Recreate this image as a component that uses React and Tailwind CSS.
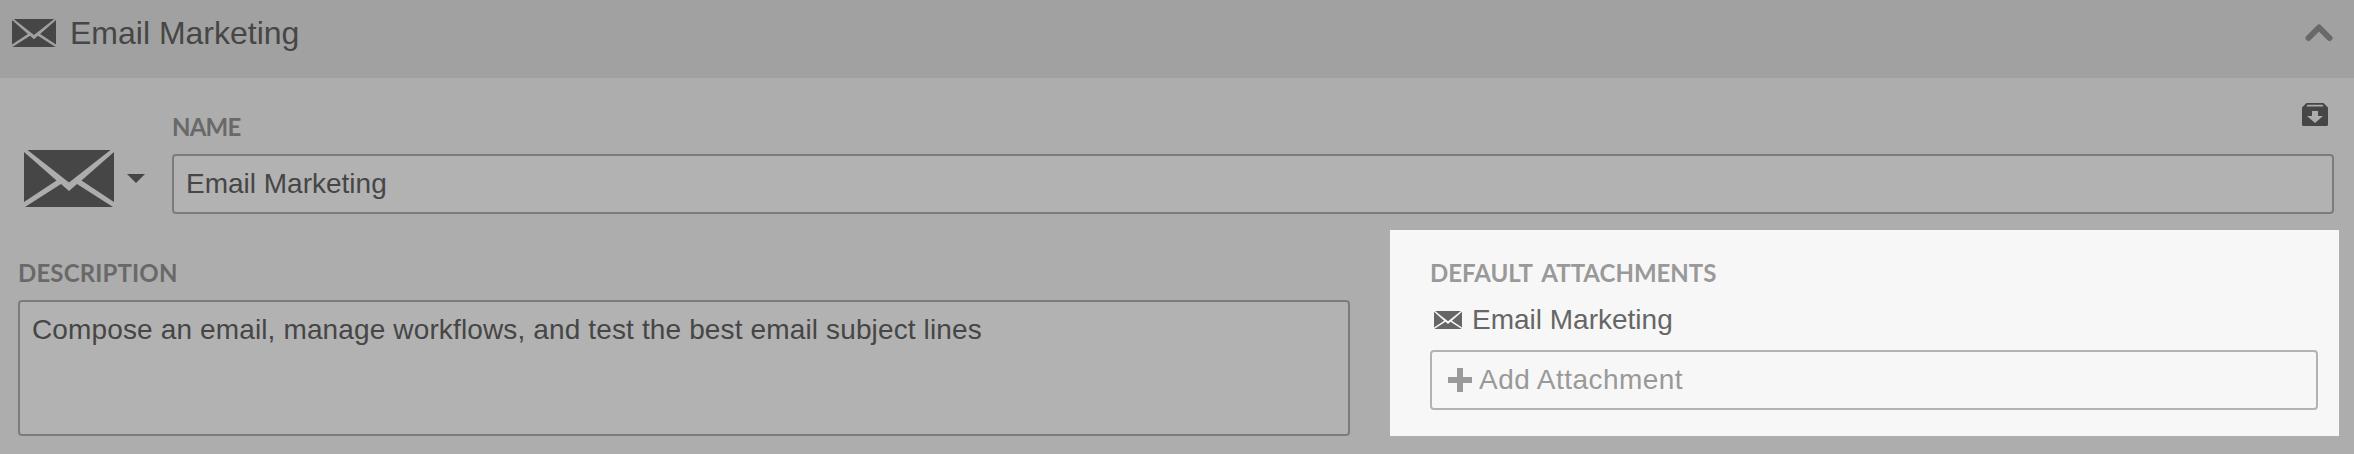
function Envelope({ className }) {
  return (
    <svg className={className} viewBox="0 0 90 57" preserveAspectRatio="none" fill="currentColor" aria-hidden="true">
      <path d="M3.500 0H86.500L45 32.500Z" />
      <path d="M0 2L32.500 30.500L0 52Z" />
      <path d="M90 2L57.500 30.500L90 52Z" />
      <path d="M1 57L37 34L45 41L53 34L89 57Z" />
    </svg>
  );
}

function Label({ className, children }) {
  return <div className={`font-['Lato',sans-serif] text-2xl leading-[30px] font-bold whitespace-nowrap ${className}`}>{children}</div>;
}

export default function App() {
  return (
    <div className="flex h-[454px] w-[2354px] flex-col overflow-hidden bg-[#adadad] font-['Liberation_Sans',Arial,sans-serif] text-[28px] text-[#464646]">
      <header className="flex h-[78px] shrink-0 items-start justify-between bg-[#a1a1a1] pr-[21px] pl-3">
        <div className="flex h-[66px] items-center">
          <Envelope className="h-[28px] w-[44px]" />
          <h1 className="pl-[14px] text-[32px] leading-[66px]">Email Marketing</h1>
        </div>
        <svg className="mt-6 h-[18px] w-7 text-[#696969]" viewBox="0 0 28 18" fill="none" stroke="currentColor" strokeWidth="6" strokeLinecap="round" strokeLinejoin="round" aria-hidden="true">
          <path d="M3.500 14L14 3.500L24.500 14" />
        </svg>
      </header>

      <section className="flex h-[136px] shrink-0 pr-5 pl-6">
        <div className="flex w-[148px] shrink-0 items-start gap-[13px] pt-[72px]">
          <Envelope className="h-[57px] w-[90px]" />
          <svg className="mt-6 h-[9px] w-[18px]" viewBox="0 0 18 9" fill="currentColor" aria-hidden="true">
            <path d="M0 0H18L9 9Z" />
          </svg>
        </div>
        <div className="flex grow flex-col">
          <div className="flex h-[76px] items-start justify-between pr-[6px]">
            <Label className="pt-[34px] tracking-[-0.8px] text-[#696969]">NAME</Label>
            <svg className="mt-[25px] h-[23px] w-[26px]" viewBox="0 0 26 23" aria-hidden="true">
              <path fill="currentColor" fillRule="evenodd" d="M4.500 0H21.500L26 4.500V21.500Q26 23 24.500 23H1.500Q0 23 0 21.500V4.500ZM5.500 1.700L4.500 3.600H21.500L20.500 1.700ZM10 8V13H5L13 20L21 13H16V8Z" />
            </svg>
          </div>
          <div className="h-[60px] rounded-[4px] border-2 border-[#7c7c7c] bg-[#b2b2b2] pl-3 leading-[56px]">Email Marketing</div>
        </div>
      </section>

      <section className="flex h-[222px] shrink-0 justify-between pt-4 pr-[15px] pl-[18px]">
        <div className="flex w-[1332px] flex-col pt-7">
          <Label className="h-[42px] tracking-[0.15px] text-[#696969]">DESCRIPTION</Label>
          <div className="h-[136px] rounded-[4px] border-2 border-[#7c7c7c] bg-[#b2b2b2] px-3 pt-2 leading-[40px] tracking-[0.135px]">
            Compose an email, manage workflows, and test the best email subject lines
          </div>
        </div>
        <div className="flex w-[949px] flex-col bg-[#f7f7f7] pt-7 pr-[21px] pl-10 text-[#666666]">
          <Label className="h-[42px] [word-spacing:4px] text-[#999999]">DEFAULT ATTACHMENTS</Label>
          <div className="flex h-[40px] items-center pl-1 leading-[40px]">
            <Envelope className="h-[18px] w-7" />
            <span className="pl-[10px]">Email Marketing</span>
          </div>
          <button className="mt-[10px] flex h-[60px] items-center rounded-[4px] border-2 border-[#b2b2b2] pl-4 text-left text-[#999999]">
            <svg className="h-6 w-6" viewBox="0 0 24 24" fill="currentColor" aria-hidden="true">
              <path d="M9 0H15V9H24V15H15V24H9V15H0V9H9Z" />
            </svg>
            <span className="pl-[7px] leading-[56px] tracking-[0.45px]">Add Attachment</span>
          </button>
        </div>
      </section>
    </div>
  );
}
